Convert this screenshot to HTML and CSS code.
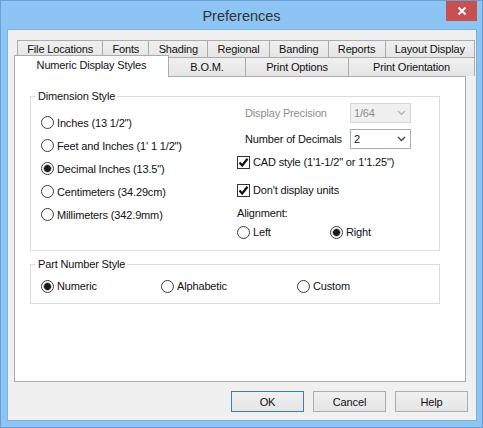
FILE: index.html
```html
<!DOCTYPE html>
<html lang="en">
<head>
    <meta charset="UTF-8">
    <title>Preferences</title>
    <link rel="stylesheet" href="styles.css">
</head>
<body>
<div class="window">
    <div class="titlebar">
        <span></span>
        <div class="title">Preferences</div>
        <div class="close">
            <svg width="10" height="10" viewBox="0 0 10 10"><path d="M1.5 1.5 L8.5 8.5 M8.5 1.5 L1.5 8.5" stroke="#fff" stroke-width="2"/></svg>
        </div>
    </div>
    <div class="client">
        <div class="tabs">
            <div class="tab-row back">
                <div class="tab">File Locations</div>
                <div class="tab">Fonts</div>
                <div class="tab">Shading</div>
                <div class="tab">Regional</div>
                <div class="tab">Banding</div>
                <div class="tab">Reports</div>
                <div class="tab">Layout Display</div>
            </div>
            <div class="tab-row front">
                <div class="tab active">Numeric Display Styles</div>
                <div class="tab bom">B.O.M.</div>
                <div class="tab options">Print Options</div>
                <div class="tab orient">Print Orientation</div>
            </div>
        </div>
        <div class="panel">
            <fieldset class="group dim">
                <legend>Dimension Style</legend>
                <div class="dim-cols">
                    <div class="units">
                        <div class="opt"><span class="radio"></span>Inches (13 1/2")</div>
                        <div class="opt"><span class="radio"></span>Feet and Inches (1' 1 1/2")</div>
                        <div class="opt"><span class="radio on"></span>Decimal Inches (13.5")</div>
                        <div class="opt"><span class="radio"></span>Centimeters (34.29cm)</div>
                        <div class="opt"><span class="radio"></span>Millimeters (342.9mm)</div>
                    </div>
                    <div class="format">
                        <div class="field disabled">
                            <span class="field-label">Display Precision</span>
                            <div class="combo">1/64
                                <svg width="9" height="6" viewBox="0 0 9 6"><polyline points="1,1 4.5,4.5 8,1" fill="none" stroke="#b5b5b5" stroke-width="1.3"/></svg>
                            </div>
                        </div>
                        <div class="field decimals">
                            <span class="field-label">Number of Decimals</span>
                            <div class="combo">2
                                <svg width="9" height="6" viewBox="0 0 9 6"><polyline points="1,1 4.5,4.5 8,1" fill="none" stroke="#404040" stroke-width="1.3"/></svg>
                            </div>
                        </div>
                        <div class="check cad"><span class="box"><svg width="11" height="11" viewBox="0 0 11 11"><polyline points="1.5,5.5 4.2,8.5 9.5,1.8" fill="none" stroke="#111" stroke-width="2.2"/></svg></span>CAD style (1'1-1/2" or 1'1.25")</div>
                        <div class="check units-off"><span class="box"><svg width="11" height="11" viewBox="0 0 11 11"><polyline points="1.5,5.5 4.2,8.5 9.5,1.8" fill="none" stroke="#111" stroke-width="2.2"/></svg></span>Don't display units</div>
                        <div class="align-label">Alignment:</div>
                        <div class="align-opts">
                            <div class="opt"><span class="radio"></span>Left</div>
                            <div class="opt"><span class="radio on"></span>Right</div>
                        </div>
                    </div>
                </div>
            </fieldset>
            <fieldset class="group part">
                <legend>Part Number Style</legend>
                <div class="part-opts">
                    <div class="opt"><span class="radio on"></span>Numeric</div>
                    <div class="opt"><span class="radio"></span>Alphabetic</div>
                    <div class="opt"><span class="radio"></span>Custom</div>
                </div>
            </fieldset>
        </div>
        <div class="buttons">
            <div class="btn default">OK</div>
            <div class="btn">Cancel</div>
            <div class="btn">Help</div>
        </div>
    </div>
</div>
</body>
</html>
```

FILE: styles.css
```css
* {
    box-sizing: border-box;
}
body {
    margin: 0;
    font: 11px "Liberation Sans", Arial, sans-serif;
    letter-spacing: -0.15px;
    color: #111;
}
.window {
    width: 483px;
    height: 428px;
    border: 1px solid #6a9fd4;
    background: #8cc4f4;
}
.titlebar {
    display: grid;
    grid-template-columns: 1fr auto 1fr;
    height: 28px;
}
.title {
    align-self: center;
    font-size: 14.5px;
    letter-spacing: 0;
    color: #333;
    padding-top: 1px;
}
.close {
    justify-self: end;
    align-self: start;
    width: 31px;
    height: 20px;
    margin-right: 5px;
    background: #c75050;
    display: flex;
    align-items: center;
    justify-content: center;
}
.client {
    margin: 0 5px 0 6px;
    height: 392px;
    border: 1px solid #7fb0dc;
    background: #f0f0f0;
    padding: 10px 0 0 6px;
}

/* tabs */
.tab-row {
    display: flex;
}
.tab-row.back {
    height: 17px;
    margin: 0 1px 0 3px;
}
.tab-row.front {
    height: 19px;
    margin-right: 1px;
}
.tab {
    flex: 1 1 auto;
    display: flex;
    align-items: center;
    justify-content: center;
    border: 1px solid #acacac;
    border-bottom: none;
    background: linear-gradient(#f0f0f0, #e5e5e5);
    white-space: nowrap;
    padding: 0 8px;
}
.tab + .tab {
    margin-left: -1px;
}
.back .tab {
    height: 17px;
}
.front .tab {
    height: 19px;
    padding: 0;
}
.front .tab.active {
    flex: 0 0 155px;
    height: 22px;
    margin-top: -2px;
    background: #fff;
    position: relative;
    z-index: 1;
    padding-bottom: 3px;
}
.front .bom {
    flex: 0 0 78px;
}
.front .options {
    flex: 0 0 104px;
}

/* panel */
.panel {
    width: 452px;
    height: 306px;
    border: 1px solid #acacac;
    background: #fff;
    padding: 13px 0 0 15px;
}
.group {
    margin: 0;
    width: 410px;
    border: 1px solid #dcdcdc;
    padding: 0 0 0 10px;
}
.group legend {
    margin-left: -5px;
    padding: 0 2px;
    line-height: 13px;
}
.dim {
    padding-bottom: 9px;
}
.part {
    margin-top: 7px;
    padding-bottom: 8px;
}
.dim-cols {
    display: flex;
}
.units {
    width: 196px;
    margin-top: 8px;
}
.units .opt {
    height: 23px;
}
.opt {
    display: flex;
    align-items: center;
    white-space: nowrap;
}
.radio {
    width: 13px;
    height: 13px;
    flex: none;
    border: 1px solid #3c3c3c;
    border-radius: 50%;
    background: #fff;
    margin-right: 3px;
}
.radio.on {
    background: radial-gradient(circle, #1a1a1a 0 3px, #8a8a8a 3.6px, #fff 4.4px);
}
.field {
    display: flex;
    align-items: center;
    height: 20px;
    padding-left: 8px;
}
.field-label {
    width: 105px;
}
.combo {
    width: 61px;
    height: 20px;
    border: 1px solid #acacac;
    background: #fff;
    display: flex;
    align-items: center;
    justify-content: space-between;
    padding: 0 4px 0 3px;
}
.disabled {
    color: #8d8d8d;
}
.disabled .combo {
    border-color: #d5d5d5;
    background: #f0f0f0;
}
.decimals {
    margin-top: 6px;
}
.check {
    display: flex;
    align-items: center;
    height: 18px;
    white-space: nowrap;
}
.cad {
    margin-top: 4px;
}
.units-off {
    margin-top: 10px;
}
.box {
    width: 13px;
    height: 13px;
    flex: none;
    border: 1px solid #333;
    background: #fff;
    margin-right: 3px;
    display: flex;
    align-items: center;
    justify-content: center;
}
.align-label {
    height: 14px;
    line-height: 14px;
    margin-top: 7px;
}
.align-opts {
    display: grid;
    grid-template-columns: 93px auto;
    height: 18px;
    margin-top: 3px;
}
.part-opts {
    display: grid;
    grid-template-columns: 120px 136px auto;
    height: 18px;
    margin-top: 6px;
}

/* buttons */
.buttons {
    display: flex;
    justify-content: flex-end;
    gap: 9px;
    margin-top: 9px;
    padding-right: 8px;
}
.btn {
    width: 73px;
    height: 21px;
    border: 1px solid #acacac;
    background: linear-gradient(#f0f0f0, #e5e5e5);
    display: flex;
    align-items: center;
    justify-content: center;
}
.btn.default {
    border-color: #3c7fb1;
}
```
